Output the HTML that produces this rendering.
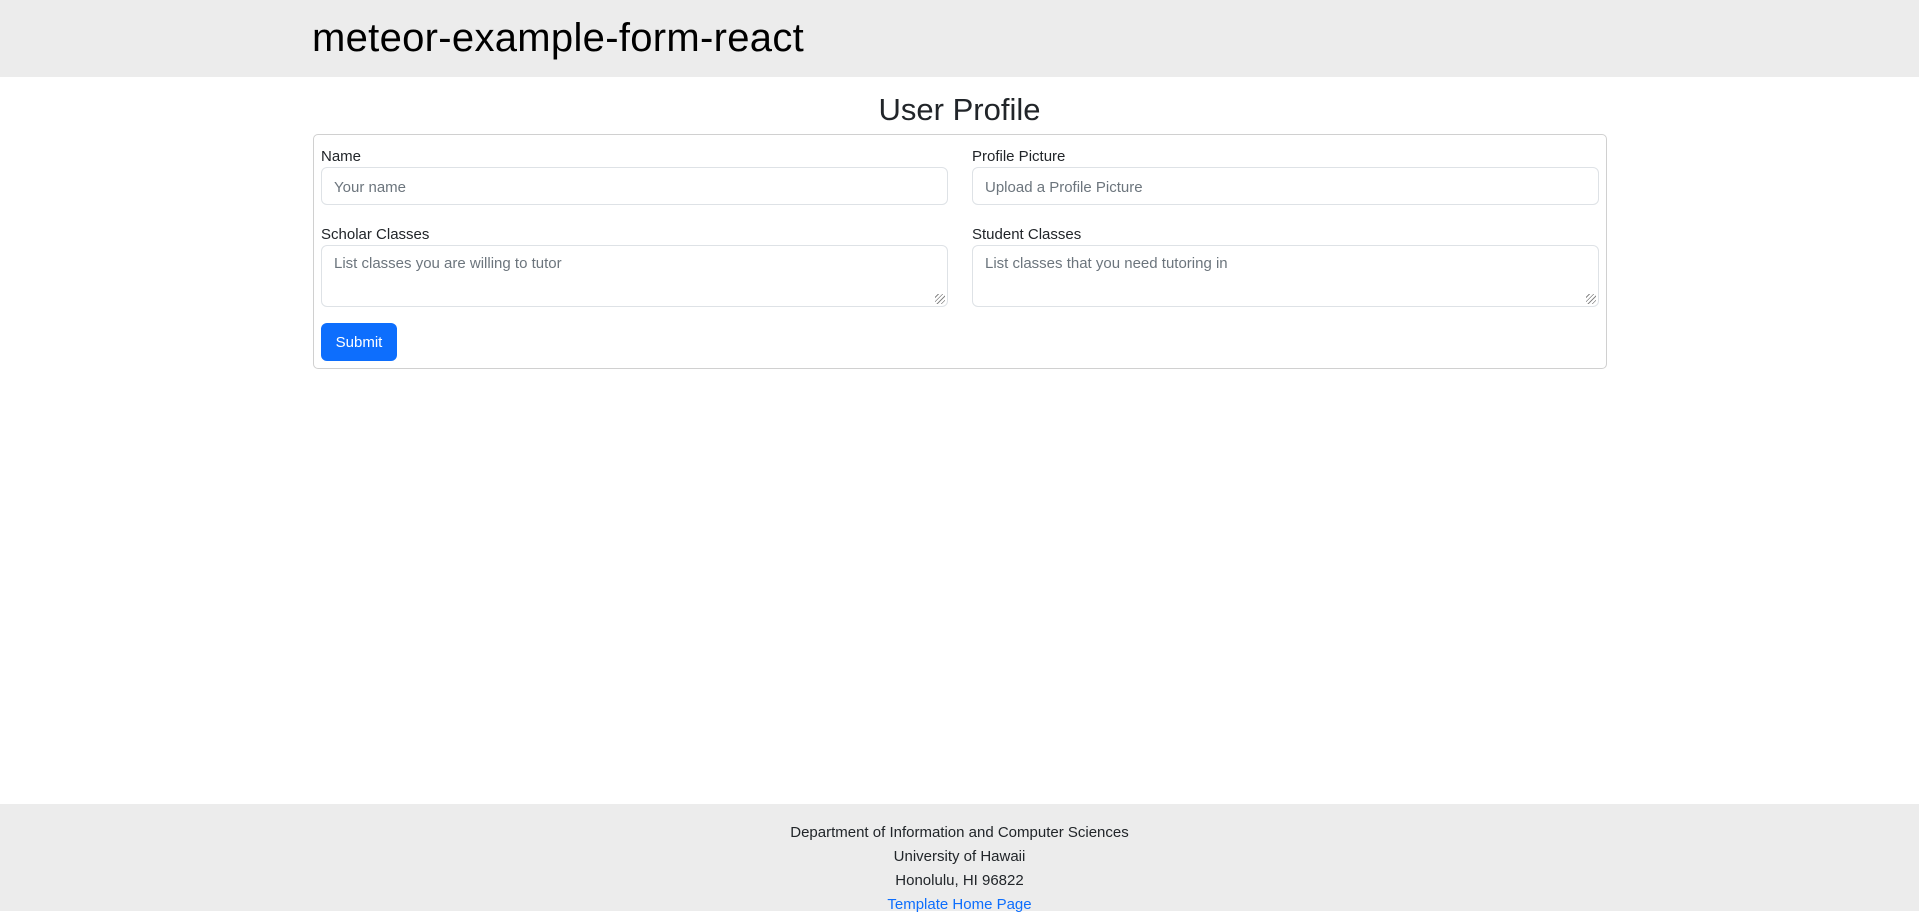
<!DOCTYPE html>
<html><head><meta charset="utf-8"><style>
*{box-sizing:border-box}
body{margin:0;width:1919px;height:911px;position:relative;font-family:"Liberation Sans",sans-serif;font-size:16px;color:#212529;background:#fff;overflow:hidden}
.hdr{position:absolute;left:0;top:0;width:1919px;height:77px;background:#ececec}
.hdr h1{position:absolute;left:312px;top:14px;margin:0;font-size:40px;letter-spacing:0.3px;font-weight:400;line-height:48px;color:#000}
.title{position:absolute;left:0;width:1919px;top:91px;text-align:center;font-size:31px;line-height:38px;margin:0;font-weight:400}
.card{position:absolute;left:313px;top:134px;width:1294px;height:235px;border:1px solid #d0d0d0;border-radius:5px}
.lbl{position:absolute;font-size:15px;line-height:20px}
.in{position:absolute;border:1px solid #dee2e6;border-radius:6px;padding:2px 12px 0;color:#6c757d;font-size:15px;line-height:36px;background:#fff}
.ta{line-height:20px;padding-top:8px}
.grip{position:absolute;right:2px;bottom:2px;width:10px;height:10px;background:repeating-linear-gradient(135deg,transparent 0 2px,#888 2px 3px)}
.btn{position:absolute;left:321px;top:323px;width:76px;height:38px;background:#0d6efd;color:#fff;border-radius:6px;font-size:15px;line-height:40px;text-align:center}
.ftr{position:absolute;left:0;top:804px;width:1919px;height:107px;background:#ececec;text-align:center;font-size:15px;line-height:24px;padding-top:17px}
.ftr a{color:#0d6efd;text-decoration:none}
</style></head><body>
<div class="hdr"><h1>meteor-example-form-react</h1></div>
<h2 class="title">User Profile</h2>
<div class="card"></div>
<div class="lbl" style="left:321px;top:147px">Name</div>
<div class="in" style="left:321px;top:167px;width:627px;height:38px">Your name</div>
<div class="lbl" style="left:972px;top:147px">Profile Picture</div>
<div class="in" style="left:972px;top:167px;width:627px;height:38px">Upload a Profile Picture</div>
<div class="lbl" style="left:321px;top:225px">Scholar Classes</div>
<div class="in ta" style="left:321px;top:245px;width:627px;height:62px">List classes you are willing to tutor<div class="grip"></div></div>
<div class="lbl" style="left:972px;top:225px">Student Classes</div>
<div class="in ta" style="left:972px;top:245px;width:627px;height:62px">List classes that you need tutoring in<div class="grip"></div></div>
<div class="btn">Submit</div>
<div class="ftr">Department of Information and Computer Sciences<br>University of Hawaii<br>Honolulu, HI 96822<br><a>Template Home Page</a></div>
</body></html>
